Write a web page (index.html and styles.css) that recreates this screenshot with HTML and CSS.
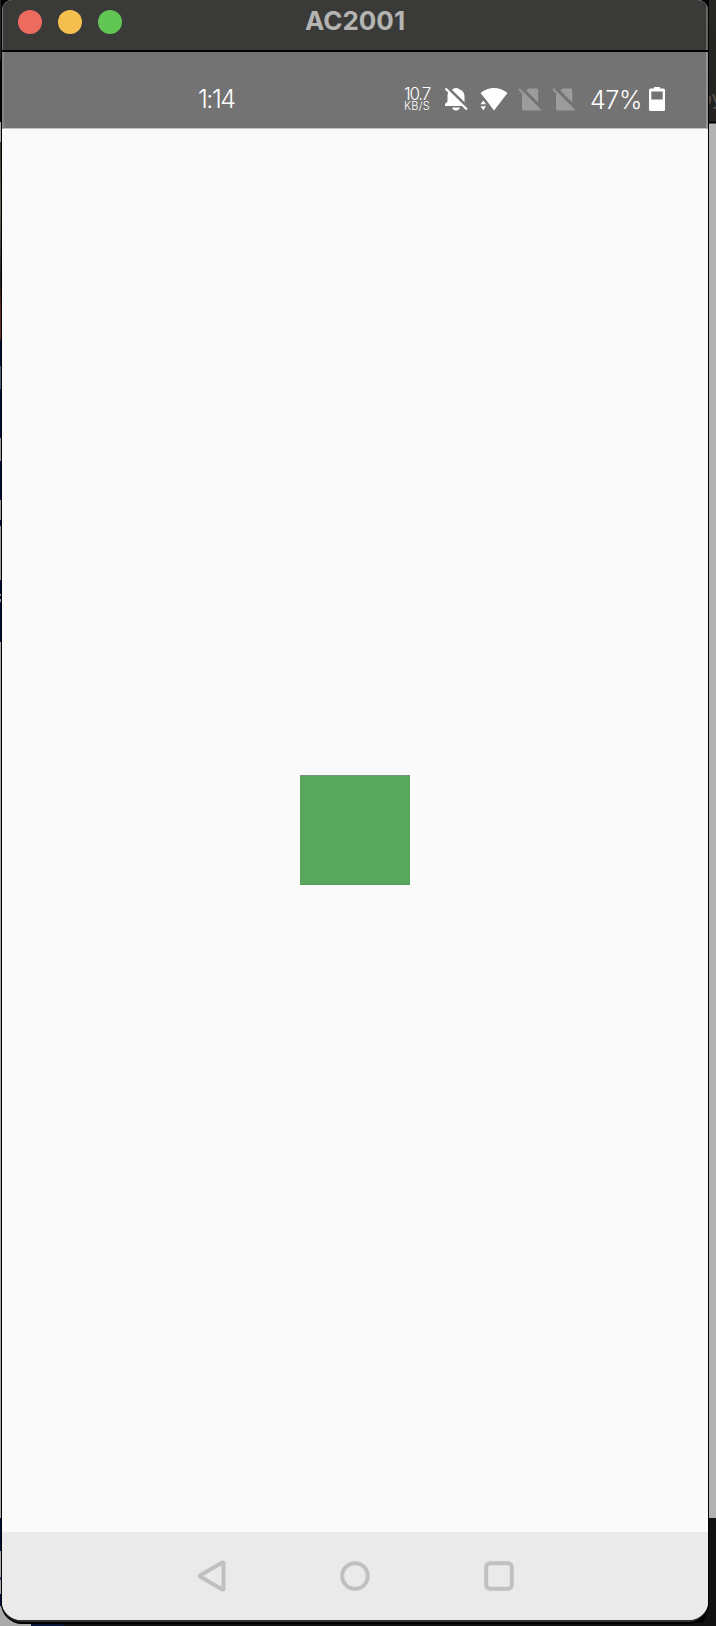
FILE: index.html
```html
<!DOCTYPE html>
<html lang="en">
<head>
<meta charset="utf-8">
<title>AC2001</title>
<link rel="stylesheet" href="styles.css">
</head>
<body>
<div class="backdrop"><i class="strip"></i><i class="side"></i><i class="floor"></i><span class="behind">oy</span></div>
<main class="window">
  <header class="titlebar">
    <div class="lights"><i class="red"></i><i class="yellow"></i><i class="green"></i></div>
    <h1>AC2001</h1>
  </header>
  <div class="status">
    <span class="time">1:14</span>
    <div class="speed"><span class="rate">10.7</span><span class="unit">KB/S</span></div>
    <svg class="bell" width="24" height="24" viewBox="0 0 24 24"><path fill="#fff" d="M3.500 8Q4 3.500 8.500 2.500 9 1 12 1t3.500 1.500Q20 3.500 20.500 9v6.500L23 18v1H1v-2l2.500-2.500zM8 20.500h8q-1 3-4 3t-4-3z"/><path d="M3 .5 24 21" stroke="#737373" stroke-width="3.500"/><path d="M1.500 1.500 23 22.500" stroke="#fff" stroke-width="2.200"/></svg>
    <svg class="wifi" width="28" height="24" viewBox="0 0 28 24"><path fill="#fff" d="M.5 6Q7 1 14 1t13.500 5L14 23.500 6.200 13z"/><path fill="#fff" d="m.5 17.300 2.800-3.800 2.800 3.800zm0 2h5.600l-2.800 4z"/></svg>
    <svg class="sim" width="24" height="24" viewBox="0 0 24 24"><path fill="#9c9c9c" d="M10.500 1.500 4 7.500v14Q4 23.500 5.500 23.500h14.700V3q0-1.500-1.500-1.500z"/><path d="m3 .5 21 21" stroke="#737373" stroke-width="3.200"/><path d="m1 2 21.500 21.500" stroke="#9c9c9c" stroke-width="1.800"/></svg>
    <svg class="sim" width="24" height="24" viewBox="0 0 24 24"><path fill="#9c9c9c" d="M10.500 1.500 4 7.500v14Q4 23.500 5.500 23.500h14.700V3q0-1.500-1.500-1.500z"/><path d="m3 .5 21 21" stroke="#737373" stroke-width="3.200"/><path d="m1 2 21.500 21.500" stroke="#9c9c9c" stroke-width="1.800"/></svg>
    <span class="percent">47%</span>
    <svg class="battery" width="16" height="24" viewBox="0 0 16 24"><path fill="#fff" fill-rule="evenodd" d="M5 0h6v1.500h3.500Q16 1.500 16 3v19.500q0 1.500-1.500 1.500h-13Q0 24 0 22.500V3q0-1.500 1.500-1.500H5zM2.300 4.500V12.500h11.400V4.500z"/></svg>
  </div>
  <section class="screen"><div class="box"></div></section>
  <nav class="nav">
    <svg width="30" height="32" viewBox="0 0 30 32"><path stroke-linejoin="round" d="M27.500 3v26q-.4.800-1.200.4L4 16.500q-.6-.5 0-1L26.300 2.600q.8-.4 1.200.4z"/></svg>
    <svg width="30" height="32" viewBox="0 0 30 32"><circle cx="15" cy="16" r="12.800"/></svg>
    <svg width="30" height="32" viewBox="0 0 30 32"><rect x="2.200" y="3.200" width="25.600" height="25.600" rx="4"/></svg>
  </nav>
</main>
</body>
</html>
```
FILE: styles.css
```css
* { box-sizing: border-box; }
body { margin: 0; height: 1626px; overflow: hidden; padding-left: 2px; background: #000; font-family: Inter, "Liberation Sans", sans-serif; }
/* Desktop visible round the window */
.backdrop { position: absolute; inset: 0; z-index: -1; overflow: hidden; background: #000; }
.strip { position: absolute; left: 0; top: 0; width: 1px; height: 1626px; background: linear-gradient(#222 0 60px, #050505 60px 122px, #aaa 122px 142px, #40382c 142px, #6e675a 210px, #202018 282px, #5b2a20 303px, #6b3024 339px, #020f3c 340px 366px, #52607f 366px 389px, #020f3c 389px 438px, #999 438px 461px, #020f3c 461px 500px, #999 500px 520px, #020f3c 520px 526px, #999 526px 580px, #020f3c 580px 594px, #999 594px 596px, #020f3c 596px 599px, #999 599px 602px, #020f3c 602px 642px, #aaa 642px 1518px, #020f3c 1518px 1551px, #aaa 1551px 1577px, #283b66 1577px 1580px, #aaa 1580px 1594px, #020f3c 1594px 1606px, #aaa 1606px); }
.side { position: absolute; left: 709px; top: 0; width: 7px; height: 1626px; background: linear-gradient(#262623 0, #23221f 121px, #000 122px 123px, #b2b2b2 124px 1518px, #111 1518px); }
.floor { position: absolute; left: 0; bottom: 0; width: 716px; height: 20px; background: linear-gradient(90deg, #aaa 0 31px, #0b1738 31px 63px, #111 65px); clip-path: polygon(0 0, 1px 0, 17px 17px, 703px 17px, 709px 0, 100% 0, 100% 100%, 0 100%); }
.behind { position: absolute; left: 700px; top: 86px; font-size: 20px; color: #55534f; }
.window { width: 706px; height: 1622px; overflow: hidden; border-radius: 10px 10px 20px 20px; background: #fafafa; border-bottom: 2px solid #333; box-shadow: 0 0 0 1px #000, 0 1px 0 1px #000; }
.titlebar { height: 52px; display: grid; grid-template-columns: 1fr auto 1fr; background: #3a3a38; border-bottom: 2px solid #000; box-shadow: inset 1px 0 #777, inset -2px 0 #666; }
.lights { display: flex; gap: 16px; padding: 10px 0 0 16px; }
.lights i { width: 24px; height: 24px; border-radius: 50%; }
.red { background: #ed6a5f; }
.yellow { background: #f5bf4f; }
.green { background: #62c655; }
h1 { margin: 0; padding-top: 5px; font-size: 26px; line-height: 32px; font-weight: 700; color: #b4b4b2; }
.status { height: 77px; display: flex; align-items: flex-start; padding: 35px 0 0 194px; background: #737373; color: #fff; border-bottom: 1px solid #c4c4c4; border-left: 2px solid #858585; border-right: 2px solid #919191; }
.time { width: 206px; font-size: 25px; line-height: 25px; font-weight: 300; letter-spacing: -1.5px; }
.speed { width: 40px; display: flex; flex-direction: column; }
.rate { font-size: 17px; line-height: 14px; font-weight: 300; letter-spacing: -1.2px; }
.unit { font-size: 11px; line-height: 11px; font-weight: 300; letter-spacing: .2px; }
.wifi { margin-left: 12px; }
.sim { margin-left: 10px; }
.percent { margin-left: 14px; width: 59px; font-size: 25px; line-height: 26px; font-weight: 300; letter-spacing: -.4px; }
.screen { height: 1403px; display: grid; place-items: center; padding: 0 0 1px; }
.box { width: 110px; height: 110px; background: #59a65d; border-top: 1px solid #7c917c; border-bottom: 1px solid #539957; }
.nav { height: 88px; background: #eaeaea; display: flex; justify-content: center; gap: 114px; padding-top: 28px; }
.nav svg { fill: none; stroke: #c0c0c0; stroke-width: 4; }
```
